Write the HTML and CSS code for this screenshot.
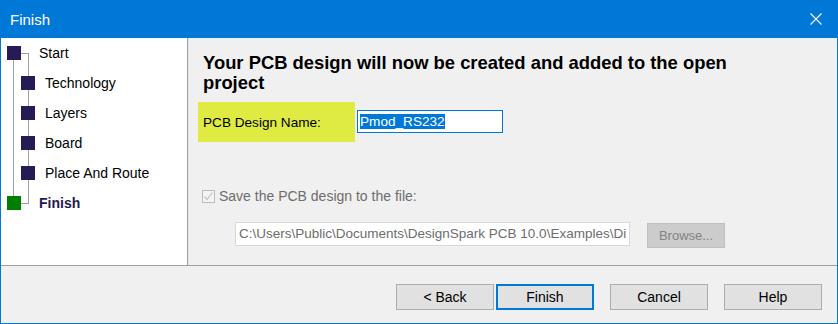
FILE: index.html
```html
<!DOCTYPE html>
<html>
<head>
<meta charset="utf-8">
<link rel="stylesheet" href="styles.css">
</head>
<body>
<div class="window">
  <div class="titlebar">
    <span class="title">Finish</span>
    <svg class="close" width="12" height="12" viewBox="0 0 12 12"><path d="M0.5 0.5 L11.5 11.5 M11.5 0.5 L0.5 11.5" stroke="#fff" stroke-width="1.1" fill="none"/></svg>
  </div>
  <div class="frame">
    <div class="main">
      <div class="side">
        <div class="tree">
          <div class="row root"><span class="sq"></span><span class="lbl">Start</span></div>
          <div class="row child"><span class="sq"></span><span class="lbl">Technology</span></div>
          <div class="row child"><span class="sq"></span><span class="lbl">Layers</span></div>
          <div class="row child"><span class="sq"></span><span class="lbl">Board</span></div>
          <div class="row child"><span class="sq"></span><span class="lbl">Place And Route</span></div>
          <div class="row root current"><span class="sq green"></span><span class="lbl">Finish</span></div>
        </div>
      </div>
      <div class="content">
        <h1 class="heading">Your PCB design will now be created and added to the open project</h1>
        <div class="namerow">
          <div class="hl">PCB Design Name:</div>
          <div class="textbox"><span class="sel">Pmod_RS232</span></div>
        </div>
        <div class="checkrow">
          <span class="check"><svg width="11" height="11" viewBox="0 0 11 11"><path d="M1.5 5.5 L4 8.5 L9.5 1.5" stroke="#c2c2c2" stroke-width="1.2" fill="none"/></svg></span>
          <span class="checklbl">Save the PCB design to the file:</span>
        </div>
        <div class="pathrow">
          <div class="pathbox">C:\Users\Public\Documents\DesignSpark PCB 10.0\Examples\Di</div>
          <div class="browse">Browse...</div>
        </div>
      </div>
    </div>
    <div class="footer">
      <div class="btn">&lt; Back</div>
      <div class="btn default">Finish</div>
      <div class="btn gap">Cancel</div>
      <div class="btn gap">Help</div>
    </div>
  </div>
</div>
</body>
</html>
```
FILE: styles.css
```css
html, body {
  margin: 0;
  padding: 0;
  background: #f0f0f0;
}
body {
  font-family: "Liberation Sans", Arial, sans-serif;
  font-size: 14px;
  color: #000;
}
.window {
  width: 838px;
  height: 324px;
  display: flex;
  flex-direction: column;
}
.titlebar {
  height: 38px;
  flex: none;
  background: #0078d7;
  display: flex;
  align-items: center;
  justify-content: space-between;
  padding: 0 16px 0 10px;
}
.title {
  color: #fff;
  font-size: 15px;
}
.close {
  display: block;
}
.frame {
  flex: 1;
  display: flex;
  flex-direction: column;
  border: 1px solid #0078d7;
  border-top: none;
  background: #f0f0f0;
}
.main {
  height: 227px;
  flex: none;
  display: flex;
  border-bottom: 1px solid #a0a0a0;
}
.side {
  width: 186px;
  flex: none;
  background: #fff;
  border-right: 1px solid #a0a0a0;
}
.tree {
  position: relative;
}
.tree::before {
  content: "";
  position: absolute;
  left: 12px;
  top: 22px;
  width: 1px;
  height: 136px;
  background: #a0a0a0;
}
.tree::after {
  content: "";
  position: absolute;
  left: 20px;
  top: 15px;
  width: 7px;
  height: 149px;
  border-right: 1px solid #a0a0a0;
  border-top: 1px solid #a0a0a0;
  border-bottom: 1px solid #a0a0a0;
}
.row {
  height: 30px;
  display: flex;
  align-items: center;
  position: relative;
  z-index: 1;
}
.row.root { padding-left: 6px; }
.row.child { padding-left: 20px; }
.sq {
  width: 14px;
  height: 14px;
  background: #261b55;
  flex: none;
}
.sq.green { background: #008000; }
.row.root .lbl { margin-left: 18px; }
.row.child .lbl { margin-left: 10px; }
.row.current .lbl {
  font-weight: bold;
  color: #221a4f;
  margin-left: 18px;
}
.content {
  flex: 1;
  border-left: 1px solid #e3e3e3;
  padding: 15px 0 0 0;
  display: flex;
  flex-direction: column;
}
.heading {
  margin: 0 0 0 14px;
  font-size: 18.4px;
  line-height: 20px;
  font-weight: bold;
  width: 560px;
}
.namerow {
  margin: 9px 0 0 9px;
  display: flex;
  align-items: center;
}
.hl {
  width: 152px;
  height: 40px;
  background: #dfea42;
  padding-left: 5px;
  display: flex;
  align-items: center;
  font-size: 13.6px;
}
.textbox {
  margin-left: 2px;
  width: 146px;
  height: 23px;
  box-sizing: border-box;
  border: 1px solid #0078d7;
  background: #fff;
  padding-left: 2px;
  display: flex;
  align-items: center;
  margin-top: -1px;
}
.sel {
  background: #0078d7;
  color: #fff;
  height: 15px;
  line-height: 15px;
  display: block;
  font-size: 13.6px;
}
.checkrow {
  margin: 46px 0 0 13px;
  display: flex;
  align-items: center;
  height: 16px;
}
.check {
  width: 13px;
  height: 13px;
  box-sizing: border-box;
  border: 1px solid #bcbcbc;
  background: #f4f4f4;
  display: flex;
  align-items: center;
  justify-content: center;
}
.check svg { display: block; }
.checklbl {
  margin-left: 4px;
  color: #6d6d6d;
}
.pathrow {
  margin: 18px 0 0 46px;
  display: flex;
  align-items: flex-start;
}
.pathbox {
  width: 395px;
  height: 24px;
  box-sizing: border-box;
  border: 1px solid #d9d9d9;
  background: #fff;
  color: #6d6d6d;
  padding-left: 3px;
  line-height: 22px;
  white-space: nowrap;
  overflow: hidden;
  font-size: 13.5px;
}
.browse {
  margin: 1px 0 0 17px;
  width: 78px;
  height: 25px;
  box-sizing: border-box;
  border: 1px solid #bfbfbf;
  background: #cccccc;
  color: #838383;
  display: flex;
  align-items: center;
  justify-content: center;
  font-size: 13px;
}
.footer {
  flex: 1;
  display: flex;
  justify-content: flex-end;
  align-items: flex-start;
  padding: 18px 15px 0 0;
}
.btn {
  width: 98px;
  height: 26px;
  box-sizing: border-box;
  border: 1px solid #adadad;
  background: #e1e1e1;
  display: flex;
  align-items: center;
  justify-content: center;
}
.btn.default {
  border: 2px solid #0078d7;
  margin-left: 2px;
}
.btn.gap { margin-left: 16px; }
```
